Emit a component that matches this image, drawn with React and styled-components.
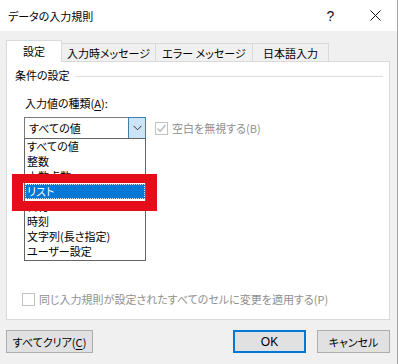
import React from 'react';
import styled, { createGlobalStyle } from 'styled-components';

const Global = createGlobalStyle`
  html, body { margin: 0; padding: 0; background: #fff; }
  body {
    font-family: "Noto Sans CJK JP", "Noto Sans", sans-serif;
    font-size: 11px;
    color: #000;
    font-feature-settings: "palt";
  }
  #root { width: 399px; height: 364px; }
`;

const Dialog = styled.div`
  width: 398px;
  height: 364px;
  box-sizing: border-box;
  border-right: 1px solid #a6a6a6;
  background: #f0f0f0;
  display: flex;
  flex-direction: column;
`;

const TitleBar = styled.div`
  height: 31px;
  flex: none;
  background: #fff;
  display: flex;
  align-items: center;
  padding-left: 8px;
`;

const Title = styled.div`
  flex: 1;
  font-size: 11px;
  line-height: 16px;
`;

const TitleButton = styled.div`
  width: ${p => p.w}px;
  height: 31px;
  display: flex;
  align-items: center;
  justify-content: center;
  font-family: "Liberation Sans", sans-serif;
  font-size: 14px;
  color: #111;
`;

const Body = styled.div`
  flex: 1;
  padding: 9px 7px 0 6px;
  display: flex;
  flex-direction: column;
`;

const TabRow = styled.div`
  display: flex;
  align-items: flex-end;
  height: 22px;
  position: relative;
  z-index: 1;
  margin-bottom: -1px;
`;

const Tab = styled.div`
  width: ${p => p.w}px;
  height: ${p => (p.active ? 22 : 19)}px;
  box-sizing: border-box;
  background: ${p => (p.active ? '#fff' : '#f0f0f0')};
  border: 1px solid #d9d9d9;
  border-bottom-color: ${p => (p.active ? '#fff' : '#d9d9d9')};
  margin-left: ${p => (p.first ? 0 : -1)}px;
  display: flex;
  align-items: center;
  justify-content: center;
  line-height: 16px;
  white-space: pre;
  padding-top: ${p => (p.active ? 0 : 1)}px;
`;

const Panel = styled.div`
  background: #fff;
  border: 1px solid #d9d9d9;
  height: 259px;
  box-sizing: border-box;
  padding: 5px 6px 12px 7px;
  display: flex;
  flex-direction: column;
`;

const GroupHeader = styled.div`
  display: flex;
  align-items: center;
  gap: 5px;
  height: 16px;
  line-height: 16px;
  padding-left: 1px;
`;

const GroupLine = styled.div`
  flex: 1;
  height: 1px;
  background: #dcdcdc;
  margin-top: 2px;
`;

const GroupBody = styled.div`
  padding-left: 10px;
  display: flex;
  flex-direction: column;
`;

const FieldLabel = styled.div`
  margin-top: 12px;
  height: 16px;
  line-height: 16px;
  padding-left: 1px;
`;

const U = styled.span`
  text-decoration: underline;
  text-underline-offset: 2px;
`;

const ComboRow = styled.div`
  margin-top: 6px;
  display: flex;
  align-items: center;
  gap: 9px;
`;

const ComboWrap = styled.div`
  position: relative;
  width: 122px;
  height: 22px;
`;

const Combo = styled.div`
  width: 100%;
  height: 100%;
  box-sizing: border-box;
  border: 1px solid #7a7a7a;
  display: flex;
  align-items: stretch;
  background: #fff;
`;

const ComboValue = styled.div`
  flex: 1;
  padding-left: 4px;
  display: flex;
  align-items: center;
  line-height: 16px;
`;

const DropButton = styled.div`
  width: 18px;
  margin: -1px -1px -1px 0;
  box-sizing: border-box;
  border: 1px solid #3c7fb1;
  background: #cce4f7;
  display: flex;
  align-items: center;
  justify-content: center;
`;

const DropList = styled.div`
  position: absolute;
  left: 0;
  top: 21px;
  width: 122px;
  box-sizing: border-box;
  border: 1px solid #646464;
  background: #fff;
  padding: 0 0 1px;
  z-index: 5;
`;

const ListItem = styled.div`
  position: relative;
  height: 15px;
  line-height: 15px;
  padding-left: 2px;
  white-space: nowrap;
  background: ${p => (p.selected ? '#0078d7' : 'transparent')};
  color: ${p => (p.selected ? '#fff' : '#000')};
  outline: ${p => (p.selected ? '1px dotted rgba(255,255,255,0.8)' : 'none')};
  outline-offset: -1px;
  z-index: ${p => (p.selected ? 2 : 'auto')};
`;

const RedFrame = styled.div`
  position: absolute;
  left: -13px;
  right: -12px;
  top: -10px;
  bottom: -12px;
  border-style: solid;
  border-color: #e60d1b;
  border-width: 9px 11px 10px 11px;
  pointer-events: none;
  z-index: 3;
`;

const CheckRow = styled.label`
  display: flex;
  align-items: center;
  gap: ${p => p.gap}px;
  color: #8f8f8f;
  line-height: 16px;
`;

const Box = styled.span`
  width: 13px;
  height: 13px;
  box-sizing: border-box;
  border: 1px solid #c2c2c2;
  background: #fff;
  display: inline-flex;
  align-items: center;
  justify-content: center;
  flex: none;
`;

const Spacer = styled.div`
  flex: 1;
`;

const FooterCheck = styled.div`
  padding-left: 8px;
`;

const ButtonRow = styled.div`
  margin-top: 10px;
  display: flex;
  align-items: center;
`;

const Button = styled.div`
  width: ${p => p.w}px;
  height: 23px;
  box-sizing: border-box;
  background: #e1e1e1;
  border: 1px solid ${p => (p.primary ? '#0078d7' : '#adadad')};
  box-shadow: ${p => (p.primary ? 'inset 0 0 0 1px #0078d7' : 'none')};
  display: flex;
  align-items: center;
  justify-content: center;
  line-height: 16px;
  margin-left: ${p => p.ml || 0};
`;

const OkText = styled.span`
  font-family: "Liberation Sans", sans-serif;
  font-size: 12px;
`;

const items = ['すべての値', '整数', '小数点数', 'リスト', '日付', '時刻', '文字列(長さ指定)', 'ユーザー設定'];

const Check = ({ checked }) => (
  <Box>
    {checked && (
      <svg width="11" height="11" viewBox="0 0 11 11">
        <polyline points="1.5,5.5 4.2,8.2 9.5,2" fill="none" stroke="#b5b5b5" strokeWidth="1.3" />
      </svg>
    )}
  </Box>
);

export default function App() {
  return (
    <>
      <Global />
      <Dialog>
        <TitleBar>
          <Title>データの入力規則</Title>
          <TitleButton w={45}>?</TitleButton>
          <TitleButton w={44}>
            <svg width="11" height="11" viewBox="0 0 11 11">
              <path d="M0.5 0.5 L10.5 10.5 M10.5 0.5 L0.5 10.5" stroke="#111" strokeWidth="1" />
            </svg>
          </TitleButton>
        </TitleBar>
        <Body>
          <TabRow>
            <Tab w={56} active first>設定</Tab>
            <Tab w={95}>入力時メッセージ</Tab>
            <Tab w={98}>エラー メッセージ</Tab>
            <Tab w={77}>日本語入力</Tab>
          </TabRow>
          <Panel>
            <GroupHeader>
              <span>条件の設定</span>
              <GroupLine />
            </GroupHeader>
            <GroupBody>
              <FieldLabel>
                入力値の種類(<U>A</U>):
              </FieldLabel>
              <ComboRow>
                <ComboWrap>
                  <Combo>
                    <ComboValue>すべての値</ComboValue>
                    <DropButton>
                      <svg width="9" height="6" viewBox="0 0 9 6">
                        <polyline points="0.5,0.8 4.5,4.8 8.5,0.8" fill="none" stroke="#333" strokeWidth="1" />
                      </svg>
                    </DropButton>
                  </Combo>
                  <DropList>
                    {items.map(it => (
                      <ListItem key={it} selected={it === 'リスト'}>
                        {it}
                        {it === 'リスト' && <RedFrame />}
                      </ListItem>
                    ))}
                  </DropList>
                </ComboWrap>
                <CheckRow gap={4}>
                  <Check checked />
                  <span>空白を無視する(B)</span>
                </CheckRow>
              </ComboRow>
            </GroupBody>
            <Spacer />
            <FooterCheck>
              <CheckRow gap={4}>
                <Check />
                <span>同じ入力規則が設定されたすべてのセルに変更を適用する(P)</span>
              </CheckRow>
            </FooterCheck>
          </Panel>
          <ButtonRow>
            <Button w={87}>
              <span>
                すべてクリア(<U>C</U>)
              </span>
            </Button>
            <Button w={73} primary ml="auto">
              <OkText>OK</OkText>
            </Button>
            <Button w={73} ml="11px">キャンセル</Button>
          </ButtonRow>
        </Body>
      </Dialog>
    </>
  );
}
